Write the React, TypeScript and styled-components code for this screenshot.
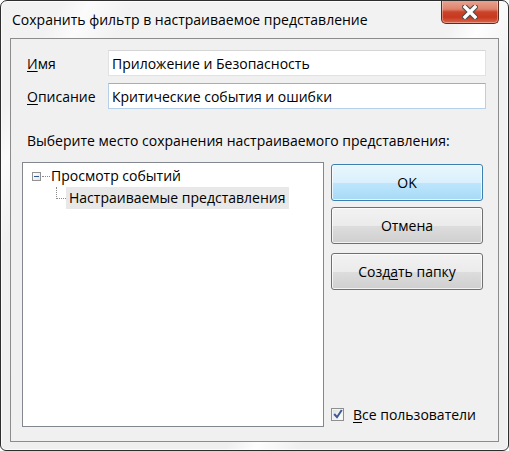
import styled, { createGlobalStyle } from 'styled-components';

const GlobalStyle = createGlobalStyle`
  html, body {
    margin: 0;
    padding: 0;
    background: #ffffff;
  }
  body {
    font-family: "Open Sans", "Noto Sans", sans-serif;
    font-size: 14px;
    color: #000;
  }
`;

const App = () => {
  return (
    <>
      <GlobalStyle />
      <Window>
        <TitleBar>
          <Title>Сохранить фильтр в настраиваемое представление</Title>
          <CloseButton aria-label="Закрыть">
            <svg width="16" height="14" viewBox="0 0 16 14">
              <path d="M3 2 L13 12 M13 2 L3 12" stroke="#4a4a4a" strokeWidth="5.5" strokeLinecap="square" />
              <path d="M3 2 L13 12 M13 2 L3 12" stroke="#ffffff" strokeWidth="3.4" strokeLinecap="square" />
            </svg>
          </CloseButton>
        </TitleBar>

        <Client>
          <Fields>
            <FieldLabel><Key>И</Key>мя</FieldLabel>
            <TextBox defaultValue="Приложение и Безопасность" />
            <FieldLabel><Key>О</Key>писание</FieldLabel>
            <TextBox $hot defaultValue="Критические события и ошибки" />
          </Fields>

          <Prompt>Выберите место сохранения настраиваемого представления:</Prompt>

          <Main>
            <Tree>
              <TreeRow>
                <Expander />
                <Connector />
                <NodeLabel>Просмотр событий</NodeLabel>
              </TreeRow>
              <TreeRow>
                <Branch />
                <NodeLabel $selected>Настраиваемые представления</NodeLabel>
              </TreeRow>
            </Tree>

            <Side>
              <Button $default>OK</Button>
              <Button>Отмена</Button>
              <Button $gapBefore>Созд<Key>а</Key>ть папку</Button>
              <CheckRow>
                <CheckBox>
                  <svg width="10" height="10" viewBox="0 0 10 10">
                    <path d="M1.2 5 L4 8.2 L8.8 1" fill="none" stroke="#3d5a98" strokeWidth="2" />
                  </svg>
                </CheckBox>
                <span><Key>В</Key>се пользователи</span>
              </CheckRow>
            </Side>
          </Main>
        </Client>
      </Window>
    </>
  );
};

export default App;

const Window = styled.div`
  width: 509px;
  height: 451px;
  box-sizing: border-box;
  display: flex;
  flex-direction: column;
  border: 1px solid #2e2e2e;
  border-radius: 7px 7px 6px 6px;
  overflow: hidden;
  background:
    linear-gradient(118deg, rgba(255,255,255,0) 62%, rgba(255,255,255,0.9) 66%, rgba(255,255,255,0) 72%),
    linear-gradient(118deg, rgba(255,255,255,0) 8%, rgba(255,255,255,0.7) 12%, rgba(255,255,255,0) 18%),
    linear-gradient(180deg, #f2f2f2 0%, #efefef 100%);
  box-shadow: inset 0 0 0 1px rgba(255, 255, 255, 0.7);
`;

const TitleBar = styled.div`
  height: 37px;
  flex: none;
  display: flex;
  align-items: center;
  padding-left: 11px;
`;

const Title = styled.div`
  font-size: 14px;
  color: #000;
  white-space: nowrap;
  text-shadow: 0 0 8px rgba(255, 255, 255, 0.9);
`;

const CloseButton = styled.div`
  align-self: flex-start;
  margin: -1px 9px 0 auto;
  width: 58px;
  height: 24px;
  box-sizing: border-box;
  display: flex;
  align-items: center;
  justify-content: center;
  border: 1px solid #5f2a20;
  border-top: none;
  border-radius: 0 0 5px 5px;
  background: linear-gradient(180deg, #e9a795 0%, #de826b 40%, #c9432a 52%, #c8391f 75%, #d9664a 100%);
  box-shadow: inset 0 0 0 1px rgba(255, 255, 255, 0.35);
`;

const Client = styled.div`
  flex: 1;
  margin: 0 9px 8px 9px;
  border: 1px solid #8c8c8c;
  background: #f0f0f0;
  display: flex;
  flex-direction: column;
  padding: 11px 12px 14px 11px;
  min-height: 0;
`;

const Fields = styled.div`
  display: grid;
  grid-template-columns: 81px 378px;
  grid-auto-rows: 26px;
  row-gap: 7px;
  padding-left: 5px;
  align-items: center;
`;

const FieldLabel = styled.label`
  font-size: 14px;
  white-space: nowrap;
`;

const Key = styled.span`
  text-decoration: underline;
  text-underline-offset: 2px;
`;

const TextBox = styled.input.attrs({ type: 'text', readOnly: true })<{ $hot?: boolean }>`
  box-sizing: border-box;
  width: 378px;
  height: 26px;
  margin: 0;
  padding: 0 3px;
  font-family: "Open Sans", "Noto Sans", sans-serif;
  font-size: 14px;
  color: #000;
  background: #ffffff;
  outline: none;
  border: 1px solid ${p => (p.$hot ? '#b6d0e9' : '#e2e2e2')};
  border-top-color: ${p => (p.$hot ? '#8eb2d8' : '#d6d6d6')};
`;

const Prompt = styled.div`
  margin-top: 22px;
  padding-left: 5px;
  line-height: 20px;
  white-space: nowrap;
`;

const Main = styled.div`
  flex: 1;
  margin-top: 11px;
  display: grid;
  grid-template-columns: 302px 152px;
  column-gap: 7px;
  min-height: 0;
`;

const Tree = styled.div`
  box-sizing: border-box;
  border: 1px solid #828790;
  background: #ffffff;
  padding: 2px 0 0 9px;
`;

const TreeRow = styled.div`
  height: 22px;
  display: flex;
  align-items: center;
  white-space: nowrap;
`;

const Expander = styled.span`
  position: relative;
  box-sizing: border-box;
  width: 9px;
  height: 9px;
  border: 1px solid #929292;
  background: linear-gradient(135deg, #ffffff, #e6e6e6);
  &::after {
    content: '';
    position: absolute;
    left: 1px;
    top: 3px;
    width: 5px;
    height: 1px;
    background: #2f5790;
  }
`;

const Connector = styled.span`
  width: 8px;
  margin-left: 1px;
  border-top: 1px dotted #8a8a8a;
`;

const Branch = styled.span`
  align-self: flex-start;
  box-sizing: border-box;
  width: 10px;
  height: 12px;
  margin-left: 24px;
  border-left: 1px dotted #8a8a8a;
  border-bottom: 1px dotted #8a8a8a;
`;

const NodeLabel = styled.span<{ $selected?: boolean }>`
  height: 22px;
  line-height: 22px;
  padding: 0 3px 0 ${p => (p.$selected ? '3px' : '1px')};
  background: ${p => (p.$selected ? '#e8e8e8' : 'transparent')};
`;

const Side = styled.div`
  display: flex;
  flex-direction: column;
  padding-top: 2px;
`;

const Button = styled.div<{ $default?: boolean; $gapBefore?: boolean }>`
  box-sizing: border-box;
  height: 37px;
  margin-bottom: 6px;
  margin-top: ${p => (p.$gapBefore ? '3px' : '0')};
  display: flex;
  align-items: center;
  justify-content: center;
  border-radius: 3px;
  border: 1px solid ${p => (p.$default ? '#3c7fb1' : '#707070')};
  background: ${p =>
    p.$default
      ? 'linear-gradient(180deg, #eaf6fd 0%, #d9f0fc 50%, #bee6fd 51%, #a7d9f5 100%)'
      : 'linear-gradient(180deg, #f2f2f2 0%, #ebebeb 50%, #dddddd 51%, #cfcfcf 100%)'};
  box-shadow: inset 0 0 0 1px rgba(255, 255, 255, 0.75);
  white-space: nowrap;
`;

const CheckRow = styled.div`
  margin-top: auto;
  margin-bottom: 3px;
  height: 20px;
  display: flex;
  align-items: center;
  gap: 9px;
  white-space: nowrap;
`;

const CheckBox = styled.span`
  box-sizing: border-box;
  width: 13px;
  height: 13px;
  display: flex;
  align-items: center;
  justify-content: center;
  border: 1px solid #8e8f8f;
  background: linear-gradient(135deg, #dcdcdc 0%, #f4f4f4 60%, #ffffff 100%);
  box-shadow: inset 0 0 0 1px #f4f4f4;
`;
